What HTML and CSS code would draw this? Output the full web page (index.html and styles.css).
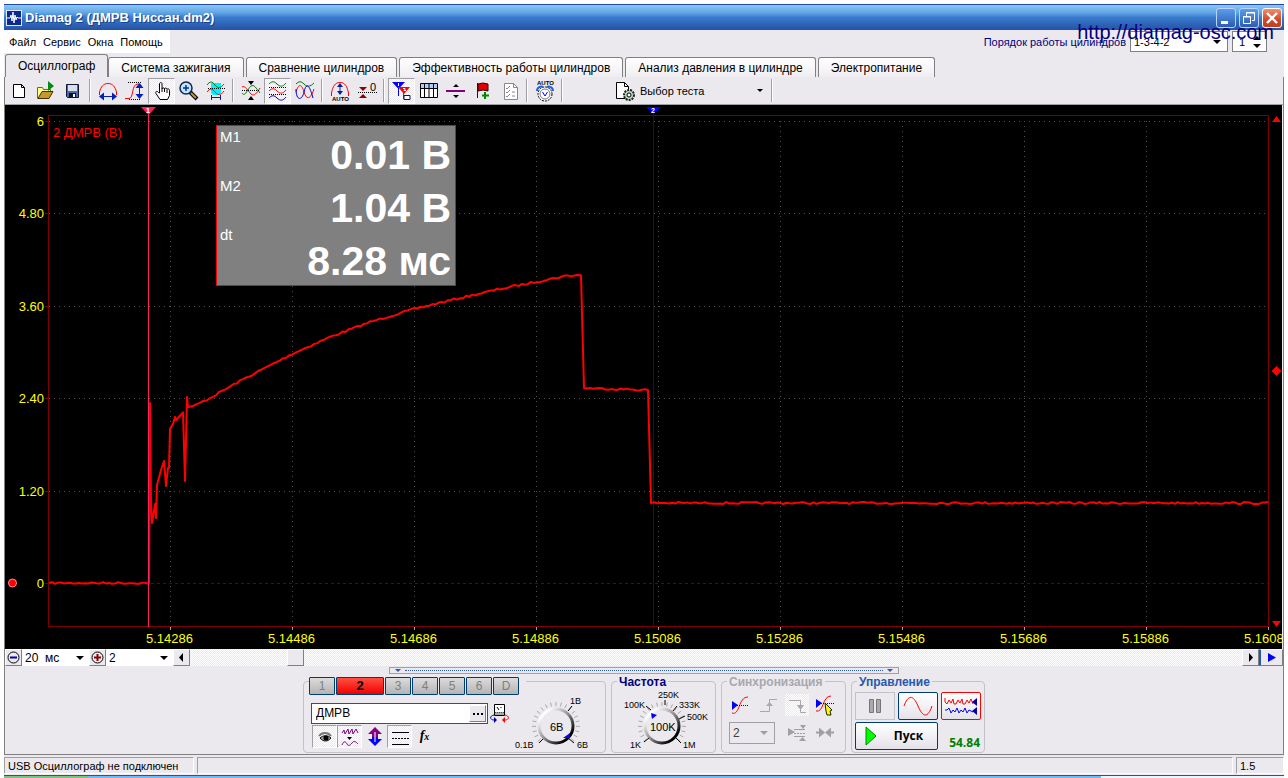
FILE: index.html
```html
<!DOCTYPE html>
<html lang="ru">
<head>
<meta charset="utf-8">
<title>Diamag 2 (ДМРВ Ниссан.dm2)</title>
<link rel="stylesheet" href="styles.css">
</head>
<body>
<div class="window">
  <header class="titlebar">
    <svg class="app-icon" width="16" height="16" viewBox="0 0 16 16"><rect width="16" height="16" fill="#dfe8fa"/><rect x="1" y="1" width="14" height="14" fill="#0a2a90"/><path d="M1 8h3l1-3 1 6 1-9 1 11 1-8 1 5 1-3 1 1h3" fill="none" stroke="#fff"/></svg>
    <h1 class="title">Diamag 2 (ДМРВ Ниссан.dm2)</h1>
    <div class="window-buttons">
      <button class="winbtn" aria-label="Свернуть"><svg width="18" height="18" viewBox="0 0 18 18"><path d="M4 12h7v3H4z" fill="#fff"/></svg></button>
      <button class="winbtn" aria-label="Восстановить"><svg width="18" height="18" viewBox="0 0 18 18" fill="none" stroke="#fff"><path d="M6.500 7V3.500h8v8H12M6 4h9"/><path d="M3.500 7.500h7v7h-7zM3 8h8"/></svg></button>
      <button class="winbtn winbtn-close" aria-label="Закрыть"><svg width="18" height="18" viewBox="0 0 18 18"><path d="M4 4l10 10M14 4L4 14" stroke="#fff" stroke-width="2.400"/></svg></button>
    </div>
  </header>

  <div class="menubar">
    <nav class="menu">
      <button>Файл</button><button>Сервис</button><button>Окна</button><button>Помощь</button>
    </nav>
    <div class="order">
      <label for="order">Порядок работы цилиндров</label>
      <span class="drop drop-box order-list"><select id="order"><option>1-3-4-2</option></select></span>
      <span class="spin"><input aria-label="Цилиндр" value="1"><svg width="8" height="14" viewBox="0 0 8 14"><path d="M0 5l4-4 4 4zM0 9h8l-4 4z"/></svg></span>
    </div>
    <a class="site" href="#">http://diamag-osc.com</a>
  </div>

  <nav class="tabs">
    <button class="tab tab-active">Осциллограф</button><button class="tab">Система зажигания</button><button class="tab">Сравнение цилиндров</button><button class="tab">Эффективность работы цилиндров</button><button class="tab">Анализ давления в цилиндре</button><button class="tab">Электропитание</button>
  </nav>

  <main class="page">
    <div class="toolbar">
      <button class="tool" aria-label="Новый"><svg viewBox="0 0 22 22"><path d="M5.500 4.500h8l3 3v10h-11z" fill="#fff" stroke="#000"/><path d="M13.500 4.500v3h3" fill="none" stroke="#000"/></svg></button>
      <button class="tool" aria-label="Открыть"><svg viewBox="0 0 22 22"><path d="M2.500 18.500v-11h5l1 2h7v3" fill="#ffff90" stroke="#806000"/><path d="M3 18.500l4-7h11l-4 7z" fill="#c89830" stroke="#403000"/><path d="M13 1l6 5-6 5z" fill="#008a10"/></svg></button>
      <button class="tool" aria-label="Сохранить"><svg viewBox="0 0 22 22"><path d="M4.500 4.500h12v13h-11l-1-1z" fill="#4868b8" stroke="#101830"/><path d="M6 5h9v6H6z" fill="#d8e0f0"/><path d="M7 13h7v4H7z" fill="#111"/><path d="M11 14h2v3h-2z" fill="#fff"/></svg></button>
      <i class="sep"></i>
      <button class="tool" aria-label="Период"><svg viewBox="0 0 22 22"><path d="M2.500 15V12C4 7 6 3.500 11 3.500S18 7 19.500 12v3" fill="none" stroke="#f00"/><path d="M5 16.500h12" stroke="#0020c0"/><path d="M2 16.500l5-4v8zM20 16.500l-5-4v8z" fill="#0020c0"/></svg></button>
      <button class="tool" aria-label="Амплитуда"><svg viewBox="0 0 22 22"><path d="M1 18.500h4c5 0 2-14.500 9-14.500 3 0 3 2 4 4" fill="none" stroke="#f00"/><path d="M4 2.500h13M5 19.500h12" stroke="#000" stroke-dasharray="1 1"/><path d="M15.500 6v11" stroke="#0020c0"/><path d="M15.500 3l4 5h-8zM15.500 19l4-5h-8z" fill="#0020c0"/></svg></button>
      <button class="tool tool-on" aria-label="Рука"><svg viewBox="0 0 22 22"><path d="M8.500 13V4c0-2 2.500-2 2.500 0v5c0-1.500 2.500-1.500 2.500 0 0-1.300 2.500-1.300 2.500.5 0-1 2.500-1 2.500 1v5l-2 4H9l-4-6c-1-2 1-3 2.500-1z" fill="#fff" stroke="#000"/><path d="M11 9v3M13.500 9v3M16 10v3" stroke="#000"/></svg></button>
      <button class="tool" aria-label="Лупа"><svg viewBox="0 0 22 22"><path d="M12 12l7 7" stroke="#000" stroke-width="4"/><path d="M13 13l5 5" stroke="#d09020" stroke-width="2"/><circle cx="8" cy="8" r="6" fill="#c4e4ff" stroke="#102850" stroke-width="1.500"/><path d="M5 8h6M8 5v6" stroke="#0030a0" stroke-width="1.500"/></svg></button>
      <button class="tool" aria-label="Окно измерений"><svg viewBox="0 0 22 22" fill="none"><path d="M6 3h10v10l-2 2H8l-2-2z" fill="#00f0ff"/><path d="M2 5c3-4 5-4 8 0s6 3 9-1" stroke="#008000"/><path d="M2 12c3-4 5-4 8 0s6 3 9-1" stroke="#f00"/><path d="M3 8.500h17" stroke="#000" stroke-dasharray="1 1"/><path d="M6.500 15v5M15.500 15v5M7 17.500h9" stroke="#0020a0"/></svg></button>
      <i class="sep"></i>
      <button class="tool" aria-label="Центр"><svg viewBox="0 0 22 22" fill="none"><path d="M2 13c3 5 6-5 9-7s5 2 9 7" stroke="#008000"/><path d="M2 7c3-2 6 4 9 7s6-1 9-6" stroke="#f00"/><path d="M2 10.500h18" stroke="#000" stroke-dasharray="1 1"/><path d="M8 1h6l-3 4zM8 20h6l-3-4z" fill="#000"/></svg></button>
      <button class="tool tool-on" aria-label="Раздельно"><svg viewBox="0 0 22 22" fill="none"><path d="M2 4c3-3 5-3 8 0s6 3 9-1" stroke="#008000"/><path d="M2 11c3-3 5-3 8 0s6 3 9-1" stroke="#f00"/><path d="M2 18c3-3 5-3 8 0s6 3 9-1" stroke="#00c"/><path d="M2 7.500h18M2 14.500h18" stroke="#000" stroke-dasharray="1 1"/></svg></button>
      <button class="tool" aria-label="Наложение"><svg viewBox="0 0 22 22" fill="none"><path d="M2 4c3-3 5-3 8 0s6 3 10-1" stroke="#008000"/><path d="M2 12c3-10 6-7 8 0s6 9 10-3" stroke="#f00"/><path d="M2 9c0 12 6 12 8 3s5-9 9 6" stroke="#00c"/></svg></button>
      <i class="sep"></i>
      <button class="tool" aria-label="Авто"><svg viewBox="0 0 22 22"><path d="M2.500 16v-3C4 6 6 2.500 11 2.500S18 6 19.500 13v3" fill="none" stroke="#f00"/><path d="M11 5v8" stroke="#0020a0"/><path d="M11 3l3 4H8zM11 15l3-4H8z" fill="#0020a0"/><text x="3" y="21" font-size="6" font-weight="bold">AUTO</text></svg></button>
      <button class="tool" aria-label="Ноль"><svg viewBox="0 0 22 22"><path d="M3 7h8l-4 4zM3 18h8l-4-4z" fill="#900000"/><path d="M2 12.500h19" stroke="#000" stroke-dasharray="1 1"/><text x="14" y="11" font-size="11">0</text></svg></button>
      <i class="sep"></i>
      <button class="tool tool-on" aria-label="Маркеры"><svg viewBox="0 0 22 22"><path d="M1 2h13L7.500 9z" fill="#00f"/><path d="M7.500 7v9" stroke="#00f"/><path d="M7 7h12l-6 7z" fill="#f00"/><path d="M12.500 13v6" stroke="#f00"/><path d="M7.500 3v3" stroke="#fff"/><path d="M12 8.500h2v1l-1 1h2" fill="none" stroke="#fff"/><path d="M13 15.500h6v4h-6z" fill="#fff" stroke="#001080"/></svg></button>
      <button class="tool" aria-label="Таблица"><svg viewBox="0 0 22 22"><path d="M2.500 3.500h17v14h-17z" fill="#fff" stroke="#000"/><path d="M3 4h16v4H3z" fill="#a8d0f8"/><path d="M2 8.500h18M6.500 4v13M11 4v13M15.500 4v13" stroke="#000"/></svg></button>
      <button class="tool" aria-label="Граница"><svg viewBox="0 0 22 22"><path d="M8 7h6l-3-3zM8 15h6l-3 3z"/><path d="M1 11h19" stroke="#800080" stroke-width="2"/></svg></button>
      <button class="tool" aria-label="Флаг"><svg viewBox="0 0 22 22"><path d="M5.500 3v15" stroke="#500"/><path d="M6 4l5-1 5 1v7l-5-1-5 1z" fill="#e00000" stroke="#300"/><path d="M13 12v7M10 15.500h7" stroke="#080" stroke-width="2"/></svg></button>
      <button class="tool" aria-label="Список"><svg viewBox="0 0 22 22" fill="none" stroke="#888"><path d="M5.500 3.500h9l4 4v12h-13z" fill="#fff"/><path d="M14.500 3.500v4h4M7 8l1 1 3-3M7 12l1 1 3-3M7 16l1 1 3-3M13 12h3M13 16h3"/></svg></button>
      <i class="sep"></i>
      <button class="tool" aria-label="Автонастройка"><svg viewBox="0 0 22 22"><text x="3" y="5" font-size="6" font-weight="bold">AUTO</text><circle cx="11" cy="14" r="7" fill="#fff" stroke="#000" stroke-dasharray="2 1"/><circle cx="11" cy="14" r="5" fill="#fff" stroke="#777"/><path d="M8.500 12l2.500 4 2.500-4" fill="none" stroke="#00f"/><path d="M3 11c0-4 4-5 6-4M19 11c0-4-4-5-6-4" fill="none" stroke="#2060e0" stroke-width="2"/></svg></button>
      <i class="sep"></i>
      <button class="test"><svg width="22" height="22" viewBox="0 0 22 22"><path d="M2.500 2.500h8l4 4v12h-12z" fill="#fff" stroke="#000"/><path d="M10.500 2.500v4h4" fill="none" stroke="#000"/><circle cx="15" cy="15" r="5" fill="#b8d8c0" stroke="#222" stroke-width="2" stroke-dasharray="2 1"/><circle cx="15" cy="15" r="2" fill="#fff" stroke="#000"/></svg><span>Выбор теста</span></button>
      <i class="sep"></i>
    </div>

    <div class="scope">
      <svg class="chart" viewBox="5 105 1277 544" preserveAspectRatio="xMinYMin meet" role="img" aria-label="Осциллограмма ДМРВ">
        <g id="grid"></g>
        <path d="M48.500 115.500H1268.500V626.500H48.500z" fill="none" stroke="#800000" shape-rendering="crispEdges"/>
        <path d="M653.500 112V626" stroke="#0000e8" shape-rendering="crispEdges"/>
        <path d="M646 107h15l-7.500 7z" fill="#0000ff"/>
        <text x="651" y="113" class="marker-no">2</text>
        <path id="trace" fill="none" stroke="#ff0000" stroke-width="2" stroke-linejoin="round"/>
        <path d="M148.500 112V627" stroke="#ff2060" shape-rendering="crispEdges"/>
        <path d="M141 107h15l-7.500 8z" fill="#ff2060"/>
        <text x="146" y="113" class="marker-no">1</text>
        <text x="53" y="137" class="channel-name">2 ДМРВ (В)</text>
        <circle cx="12.500" cy="583" r="4" fill="#ff0000" stroke="#ff9090"/>
        <path d="M1272 122h9l-4.500-6zM1272 621h9l-4.500 6zM1276.500 366l5 5-5 5-5-5z" fill="#ff0000"/>
      </svg>
      <dl class="readout">
        <dt>M1</dt><dd>0.01 В</dd>
        <dt>M2</dt><dd>1.04 В</dd>
        <dt>dt</dt><dd>8.28 мс</dd>
      </dl>
    </div>

    <div class="timebar">
      <button class="classic" aria-label="Уменьшить"><svg width="13" height="13" viewBox="0 0 13 13"><circle cx="6.500" cy="6.500" r="5.500" fill="none" stroke="#000"/><path d="M3 6.500h7" stroke="#0000a0" stroke-width="2"/></svg></button>
      <span class="drop time-drop"><select aria-label="Развёртка"><option>20 &nbsp;мс</option></select></span>
      <button class="classic" aria-label="Увеличить"><svg width="13" height="13" viewBox="0 0 13 13"><circle cx="6.500" cy="6.500" r="5.500" fill="none" stroke="#000"/><path d="M3 6.500h7M6.500 3v7" stroke="#900000" stroke-width="2"/></svg></button>
      <span class="drop time-drop"><select aria-label="Масштаб"><option>2</option></select></span>
      <button class="classic" aria-label="Влево"><svg width="13" height="13" viewBox="0 0 13 13"><path d="M8 2v9L4 6.500z"/></svg></button>
      <div class="track"><button class="classic thumb" aria-label="Ползунок"></button></div>
      <button class="classic" aria-label="Вправо"><svg width="13" height="13" viewBox="0 0 13 13"><path d="M5 2v9l4-4.500z"/></svg></button>
      <button class="classic play" aria-label="Прокрутка"><svg width="13" height="13" viewBox="0 0 13 13"><path d="M3 2v9l8-4.500z" fill="#00f"/></svg></button>
    </div>

    <div class="splitter"><i></i><span></span><i></i></div>

    <div class="controls">
      <section class="group group-channel">
        <div class="channels">
          <button>1</button><button class="channel-on">2</button><button>3</button><button>4</button><button>5</button><button>6</button><button>D</button>
        </div>
        <div class="channel-body">
          <div class="channel-left">
            <div class="row">
              <span class="name"><input aria-label="Датчик" value="ДМРВ"><button class="classic more" aria-label="Выбрать"><svg width="11" height="11" viewBox="0 0 11 11"><path d="M1 5h2v2H1zM5 5h2v2H5zM9 5h2v2H9z"/></svg></button></span>
              <button class="mini" aria-label="Прибор"><svg width="20" height="20" viewBox="0 0 20 20"><path d="M4.500 1.500h10v11h-10z" fill="#fff" stroke="#000"/><path d="M5 9h9v3H5z" fill="#aaa"/><path d="M5 9.500h9" stroke="#080" stroke-dasharray="1 1"/><path d="M9 7l-2-3M11 4v1" stroke="#000"/><path d="M4 12c-5 1-4 5 0 5" fill="none" stroke="#0000a0"/><path d="M4 14l3 3-3 3z" fill="#0000a0"/><path d="M15 12c5 1 4 5 0 5" fill="none" stroke="#f00"/><path d="M15 14l-3 3 3 3z" fill="#f00"/></svg></button>
            </div>
            <div class="row modes">
              <button class="mode tool-on" aria-label="Показать"><svg viewBox="0 0 24 22"><path d="M6 10c3-4 9-4 12 0" fill="none" stroke="#777" stroke-width="2"/><path d="M7 12c3-3 8-3 11 0-3 4-8 4-11 0z" fill="#999" stroke="#111"/><circle cx="13" cy="12" r="2.500"/></svg></button>
              <button class="mode tool-on" aria-label="Фильтр"><svg viewBox="0 0 24 22" fill="none" stroke="#800080"><path d="M4 7l2-3 1 4 3-5 1 5 3-5 1 5 3-5 2 4"/><path d="M9 11h5l-2.500 3z" fill="#000" stroke="none"/><path d="M4 19c2-5 4-3 5-1s3 2 5-1 4-1 6 1"/></svg></button>
              <button class="mode" aria-label="Сдвиг"><svg viewBox="0 0 24 22"><path d="M12 1l7 7h-4v3H9V8H5z" fill="#800080"/><path d="M12 20l7-7h-4v-2H9v2H5z" fill="#00f"/><path d="M12 6v10" stroke="#fff"/></svg></button>
              <button class="mode tool-on lines" aria-label="Линии"><svg viewBox="0 0 24 22"><path d="M4 6.500h17M4 18.500h17" stroke="#000"/><path d="M4 12.500h17" stroke="#000" stroke-dasharray="2 1"/></svg></button>
              <button class="mode fx">f<small>x</small></button>
            </div>
          </div>
          <svg class="dial" width="92" height="58" viewBox="514 693 92 58">
            <g data-dial="557 726"></g>
            <path d="M569 711l4-5M569 738l6 5M544 739l-4 4" stroke="#000"/>
            <path d="M564 738l7-5v5z" fill="#00f"/>
            <text x="551" y="731" class="dial-value">6В</text>
            <text x="571" y="704">1В</text><text x="516" y="748">0.1В</text><text x="578" y="748">6В</text>
          </svg>
        </div>
      </section>

      <section class="group group-rate">
        <h2>Частота</h2>
        <svg class="dial" width="98" height="60" viewBox="614 690 98 60">
          <g data-dial="661 726"></g>
          <path d="M650 710l-5-4M664 705v-5M672 711l4-5M678 719l6-3M675 738l5 5M648 738l-5 4" stroke="#000"/>
          <path d="M650 713l6 2-5 4z" fill="#00f"/>
          <text x="649" y="731" class="dial-value">100K</text>
          <text x="657" y="698">250K</text><text x="623" y="708">100K</text><text x="678" y="708">333K</text><text x="686" y="720">500K</text><text x="629" y="748">1K</text><text x="682" y="748">1M</text>
        </svg>
      </section>

      <section class="group group-sync">
        <h2 class="muted">Синхронизация</h2>
        <div class="sync-grid">
          <button class="mini" aria-label="Уровень"><svg viewBox="0 0 24 22" fill="none"><path d="M3 19c8 3 6-16 16-16" stroke="#f00"/><path d="M4 11.500h15" stroke="#00c" stroke-dasharray="1 1"/><path d="M3 7l6 4-6 5z" fill="#00f"/></svg></button>
          <button class="mini" aria-label="Фронт"><svg viewBox="0 0 24 22" fill="none" stroke="#a8a8ac"><path d="M3 17.500h9.500V5.500H20"/><path d="M9 12h7l-3.500-4z" fill="#a8a8ac" stroke="none"/></svg></button>
          <button class="mini dither" aria-label="Спад"><svg viewBox="0 0 24 22" fill="none" stroke="#a8a8ac"><path d="M4 6.500h11.500v12H21"/><path d="M12 11h7l-3.500 5z" fill="#a8a8ac" stroke="none"/></svg></button>
          <button class="mini" aria-label="Захват"><svg viewBox="0 0 24 22" fill="none"><path d="M3 17c8 2 6-15 15-15" stroke="#f00"/><path d="M4 9.500h17" stroke="#00c" stroke-dasharray="1 1"/><path d="M3 5l6 4-6 5z" fill="#00f"/><path d="M12 9l7 7-2 1 1 4h-4l-1-4z" fill="#ff0" stroke="#220"/></svg></button>
          <span class="drop drop-box drop-off"><select disabled aria-label="Канал синхронизации"><option>2</option></select></span>
          <button class="mini" aria-label="Границы"><svg viewBox="0 0 24 22"><path d="M3 6l7 4-7 4zM15 3h6l-3 4zM14 19h7l-3.500-4z" fill="#a0a0a4"/><path d="M9 7.500h11M9 14.500h11" stroke="#a0a0a4"/><path d="M9 11.500h11" stroke="#a0a0a4" stroke-dasharray="2 1"/></svg></button>
          <button class="mini" aria-label="Сжать"><svg viewBox="0 0 24 22"><path d="M3 9.500h3v-4l6 5-6 5v-4H3zM21 9.500h-3v-4l-6 5 6 5v-4h3z" fill="#a0a0a4"/></svg></button>
        </div>
      </section>

      <section class="group group-run">
        <h2 class="blue">Управление</h2>
        <div class="run-grid">
          <button class="flat" aria-label="Пауза"><svg width="14" height="18" viewBox="0 0 14 18" fill="#aaa" stroke="#777"><path d="M1.500 2.500h4v13h-4zM8.500 2.500h4v13h-4z"/></svg></button>
          <button class="push" aria-label="Синус"><svg width="30" height="22" viewBox="0 0 30 22" fill="none"><path d="M1 11C5 0 10-1 15 11S25 23 29 11" stroke="#f00"/></svg></button>
          <button class="push push-red" aria-label="Сигналы"><svg width="36" height="24" viewBox="0 0 36 24" fill="none"><path d="M2 4v4l2 2 2-4 2 3 2-4 1 5 2 0 2-4 2 3 2-4 1 5 2 0 2-4 2 3 2-4 2 5" stroke="#f00"/><path d="M2 16l2 0 2-2 2 5 2-3 2 2 2-4 2 5 2-3 2 2 2-4 2 5 2-3 4 2" stroke="#00f"/><path d="M34 4v8l-5-4zM34 13v8l-5-4z" fill="#00a"/></svg></button>
          <button class="push start"><svg width="12" height="20" viewBox="0 0 12 20"><path d="M1 1v18l10-9z" fill="#0f0" stroke="#080"/></svg><span>Пуск</span></button>
          <output class="rate">54.84</output>
        </div>
      </section>
    </div>
  </main>

  <footer class="status"><span>USB Осциллограф не подключен</span><span></span><span>1.5</span></footer>
  <div class="taskbar"><i></i><b></b></div>
</div>
<script src="chart.js"></script>
</body>
</html>
```
FILE: styles.css
```css
* { box-sizing: border-box; }
body { margin: 0; background: #fff; color: #000; font: 11px/14px "Liberation Sans", Arial, sans-serif; }
button, input, select { font: inherit; color: inherit; margin: 0; padding: 0; border: 0; border-radius: 0; background: none; appearance: none; outline: 0; }
svg { display: block; flex: none; }
svg text { font-family: "Liberation Sans", Arial, sans-serif; }

.window { min-height: 100vh; padding: 4px 4px 0; display: flex; flex-direction: column; }
.window > * { background-color: #ebe9ed; }

.titlebar { height: 26px; display: flex; align-items: center; gap: 3px; padding: 0 2px; border-top: 1px solid #2048a8; background: linear-gradient(#88c8f4, #62a6e6 30%, #3a7ccc 50%, #2c62b4 80%, #2850a8); }
.title { flex: 1; margin: 0; color: #fff; font: bold 13px/18px "Liberation Sans", Arial, sans-serif; text-shadow: 1px 1px #18408c; }
.window-buttons { display: flex; gap: 3px; }
.winbtn { width: 20px; height: 20px; border: 1px solid #b8d4f8; border-radius: 3px; background: linear-gradient(#5c9ce8, #2a5cb8); }
.winbtn-close { background: linear-gradient(#f09070, #d04828 60%, #c04020); border-color: #fff; }

.menubar { position: relative; height: 24px; display: flex; justify-content: space-between; align-items: flex-start; }
.menu { display: flex; gap: 7px; height: 23px; align-items: center; padding: 0 7px 0 5px; background: #fff; }
.order { display: flex; align-items: center; gap: 4px; margin-right: 17px; color: #000080; padding-top: 1px; }
.order > .drop, .spin { color: #000; }
.order-list { width: 98px; }
.spin { display: flex; align-items: center; width: 35px; height: 21px; padding: 0 6px; background: #fff; border: 1px solid #808080; }
.spin input { width: 14px; }
.site { position: absolute; right: 10px; top: -10px; font-size: 20px; line-height: 24px; color: #000080; text-decoration: none; }

.drop { display: grid; align-items: center; background: #fff; }
.drop > select { grid-area: 1 / 1; width: 100%; padding-left: 3px; }
.drop::after { content: ""; grid-area: 1 / 1; justify-self: end; margin-right: 6px; border: 4px solid transparent; border-top-color: #000; border-bottom: 0; pointer-events: none; }
.drop-box { height: 21px; border: 1px solid #808080; }

.tabs { display: flex; align-items: flex-end; gap: 2px; height: 23px; padding-left: 1px; }
.tab { height: 20px; padding: 0 12px; font-size: 12px; line-height: 18px; border: 1px solid #808080; border-bottom: 0; border-radius: 3px 3px 0 0; background: linear-gradient(#fff, #efedf1); white-space: nowrap; }
.tab-active { height: 23px; margin-right: -2px; background: #ebe9ed; }

.page { flex: 1; display: flex; flex-direction: column; border: 1px solid #808080; border-top: 0; }
.toolbar { display: flex; align-items: center; height: 28px; border-bottom: 1px solid #a0a0a4; }
.tool { display: grid; place-items: center; width: 27px; height: 26px; }
.tool svg { width: 22px; height: 22px; }
.tool-on, .track, .dither { background: repeating-conic-gradient(#fff 0 25%, #ebe9ed 0 50%) 0 0 / 2px 2px; }
.tool-on { border: 1px solid #a0a0a4; border-right-color: #fff; border-bottom-color: #fff; }
.sep { width: 2px; height: 23px; margin: 0 3px; border-left: 1px solid #a0a0a4; border-right: 1px solid #fff; }
.test { display: flex; align-items: center; gap: 4px; width: 154px; height: 26px; margin-left: 48px; }
.test::after { content: ""; margin: 0 5px 0 auto; border: 3px solid transparent; border-top-color: #000; border-bottom: 0; }

.scope { position: relative; background: #000; margin-right: 1px; }
.chart { width: 100%; height: auto; }
.chart .axis { fill: #ffff00; font-size: 13px; }
.chart .axis-y { text-anchor: end; }
.chart .axis-x { text-anchor: middle; }
.channel-name { fill: #ff0000; font-size: 13px; }
.marker-no { fill: #fff; font-size: 7px; font-weight: bold; }
.readout { position: absolute; left: 211px; top: 20px; width: 240px; height: 161px; margin: 0; padding: 2px 4px 0 3px; background: #808080; border: 1px solid #ff0000; color: #fff; display: grid; grid-template-columns: auto 1fr; grid-auto-rows: 53px; }
.readout dt { font-size: 15px; line-height: 18px; }
.readout dd { margin: 0; font-size: 41px; line-height: 54px; font-weight: bold; text-align: right; }
.readout dt:nth-of-type(n+2) { margin-top: -4px; }
.readout dt:nth-of-type(3) { margin-top: -8px; }

.timebar { display: flex; height: 17px; }
.classic { display: grid; place-items: center; width: 17px; height: 17px; background: #ebe9ed; border: 1px solid #fff; border-right-color: #808080; border-bottom-color: #808080; }
.time-drop { width: 67px; font-size: 12px; }
.time-drop::after { margin-right: 5px; }
.track { flex: 1; display: flex; }
.thumb { margin-left: 97px; }
.play { width: 24px; border-left: 2px solid #2058b0; }

.splitter { align-self: center; width: 510px; height: 7px; margin-top: 1px; padding: 0 5px; display: flex; align-items: center; gap: 4px; border: 1px solid #a0a0a8; }
.splitter span { flex: 1; border-top: 1px dotted #3058a8; }
.splitter i { border: 3px solid transparent; border-top-color: #3058a8; border-bottom: 0; }

.controls { display: flex; justify-content: center; gap: 5px; padding: 7px 0 1px; }
.group { display: flex; flex-direction: column; height: 72px; border: 1px solid #c4c2c8; border-radius: 4px; }
.group h2 { align-self: flex-start; margin: -7px 0 0 5px; padding: 0 2px; background: #ebe9ed; font: bold 12px/14px "Liberation Sans", Arial, sans-serif; color: #000080; }
.group .muted { color: #a8a8ac; }
.group .blue { color: #2858b0; }
.group-channel { width: 303px; }
.group-rate { width: 105px; }
.group-sync { width: 125px; }
.group-run { width: 134px; }

.channels { display: flex; align-self: flex-start; gap: 1px; margin: -5px 0 0 5px; padding-right: 7px; background: #ebe9ed; }
.channels button { width: 26px; height: 18px; border: 1px solid #003c74; border-radius: 1px; background: linear-gradient(#dcdcdc, #b4b4b4); color: #808080; font-size: 12px; }
.channels .channel-on { width: 48px; background: linear-gradient(#ff5040, #f00000); color: #000; font: bold 13px/14px "Liberation Sans", sans-serif; }
.channel-body { display: flex; justify-content: space-between; }
.channel-left { padding: 7px 0 0 7px; }
.row { display: flex; gap: 2px; align-items: center; }
.name { display: flex; width: 177px; height: 21px; border: 1px solid #ff0000; background: #fff; align-items: center; padding: 0 1px 0 4px; }
.name input { flex: 1; min-width: 0; font-size: 12px; }
.modes { gap: 0; margin-top: 1px; padding-left: 1px; }
.mode { width: 25px; height: 23px; display: grid; place-items: center; }
.mode svg, .sync-grid svg { width: 24px; height: 22px; }
.fx { display: block; font: italic bold 14px/22px "Liberation Serif", serif; }
.fx small { font-size: 10px; }
.dial text { font-size: 9px; }
.dial .dial-value { font-size: 11px; }
.channel-body .dial { margin-top: -2px; }
.group-rate .dial { align-self: center; margin-top: 1px; }

.sync-grid { display: grid; grid-template-columns: repeat(4, 24px); column-gap: 4px; row-gap: 6px; margin: 5px 0 0 7px; align-items: center; }
.mini { height: 22px; }
.drop-off { grid-column: span 2; width: 46px; height: 22px; background: transparent; border-color: #a0a0a4; font-size: 12px; }
.drop-off::after { border-top-color: #a0a0a4; }
.drop-off select { opacity: 1; color: #404040; }

.run-grid { display: grid; grid-template-columns: repeat(3, 40px); grid-template-rows: 28px 28px; gap: 2px 3px; margin: 3px 0 0 3px; }
.flat, .push { display: grid; place-items: center; }
.flat { border: 1px solid #c4c2c8; }
.push { border: 1px solid #003c74; border-radius: 2px; background: linear-gradient(#fff, #e4e2e8); }
.push-red { border-color: #ff0000; }
.start { grid-column: span 2; grid-template-columns: 30px 1fr; font: bold 12px/14px "Open Sans", sans-serif; }
.start span { padding-right: 6px; }
.rate { align-self: end; text-align: right; color: #008000; font: bold 12px/14px "Open Sans", sans-serif; padding-right: 1px; }

.status { display: flex; gap: 3px; padding: 2px 0 1px; }
.status span { height: 17px; padding: 0 3px; line-height: 16px; border: 1px solid #a0a0a4; border-right-color: #fff; border-bottom-color: #fff; }
.status span:nth-child(1) { width: 190px; white-space: nowrap; }
.status span:nth-child(2) { flex: 1; }
.status span:nth-child(3) { width: 48px; }
.taskbar { display: flex; justify-content: space-between; height: 4px; border-top: 1px solid #2850b0; background: #78b8f0; }
.taskbar i { width: 84px; background: #80c080; }
.taskbar b { width: 183px; background: #e8f8ff; }
```
FILE: chart.js
```js
const NS = 'http://www.w3.org/2000/svg';
function add(parent, name, attrs, text) {
  const el = document.createElementNS(NS, name);
  for (const key in attrs) el.setAttribute(key, attrs[key]);
  if (text !== undefined) el.textContent = text;
  parent.appendChild(el);
}

// Grid lines and axis labels
const grid = document.getElementById('grid');
['6', '4.80', '3.60', '2.40', '1.20', '0'].forEach((label, i) => {
  const y = Math.round(121 + i * 92.4) + 0.5;
  const zero = label === '0';
  add(grid, 'path', { d: `M49 ${y}H1268`, stroke: zero ? '#700000' : '#505050', 'stroke-dasharray': zero ? '3 3' : '1 4' });
  add(grid, 'path', { d: `M45 ${y}H48`, stroke: '#800000' });
  add(grid, 'text', { x: 44, y: y + 4.5, class: 'axis axis-y' }, label);
});
for (let i = 0; i < 10; i++) {
  const x = 170.5 + i * 122;
  add(grid, 'path', { d: `M${x} 121V626`, stroke: '#505050', 'stroke-dasharray': '1 4' });
  add(grid, 'path', { d: `M${x} 626V630`, stroke: '#a0a0a0' });
  add(grid, 'text', { x: x - 1, y: 643, class: 'axis axis-x' }, (5.14286 + i * 0.002).toFixed(5));
}

// Signal: key points joined by short steps with a small ripple
const points = [[49,583],[148,583],[149,583],[150,403],[151,503],[152,523],[153,517],[155,504],[156,518],[157,485],[161,470],[164,461],[166,486],[168,468],[169,468],[170,429],[173,424],[175,417],[176,420],[183,413],[185,481],[187,397],[188,407],[193,406],[200,403],[210,398],[240,381],[292,354],[330,337],[370,322],[414,309],[460,298],[500,289],[540,281],[565,276],[581,275],[584,388],[648,390],[651,503],[1268,503]];
let seed = 7;
const noise = () => (seed = (seed * 16807) % 2147483647) / 2147483647 - 0.5;
let d = 'M49 583';
for (let i = 1; i < points.length; i++) {
  const [x0, y0] = points[i - 1], [x1, y1] = points[i];
  const steps = Math.max(1, Math.floor((x1 - x0) / 3));
  for (let s = 1; s <= steps; s++) {
    const wobble = steps > 1 ? noise() * 2 : 0;
    d += `L${(x0 + (x1 - x0) * s / steps).toFixed(1)} ${(y0 + (y1 - y0) * s / steps + wobble).toFixed(1)}`;
  }
}
document.getElementById('trace').setAttribute('d', d);

// Knobs: shaded ring and scale ticks
document.querySelectorAll('[data-dial]').forEach((g, n) => {
  const [cx, cy] = g.dataset.dial.split(' ').map(Number);
  for (let a = 140; a <= 400; a += 13) {
    const c = Math.cos(a * Math.PI / 180), s = Math.sin(a * Math.PI / 180);
    add(g, 'path', { d: `M${cx + c * 20} ${cy + s * 20}L${cx + c * 24} ${cy + s * 24}`, stroke: '#a8a8a8' });
  }
  add(g, 'linearGradient', { id: 'ring' + n, x2: 1, y2: 1 });
  const gradient = g.lastChild;
  add(gradient, 'stop', { offset: 0.15, 'stop-color': '#ffffff' });
  add(gradient, 'stop', { offset: 0.5, 'stop-color': '#909090' });
  add(gradient, 'stop', { offset: 0.85, 'stop-color': '#000000' });
  add(g, 'circle', { cx, cy, r: 17, fill: '#ebe9ed', stroke: `url(#ring${n})`, 'stroke-width': 3 });
});
```
